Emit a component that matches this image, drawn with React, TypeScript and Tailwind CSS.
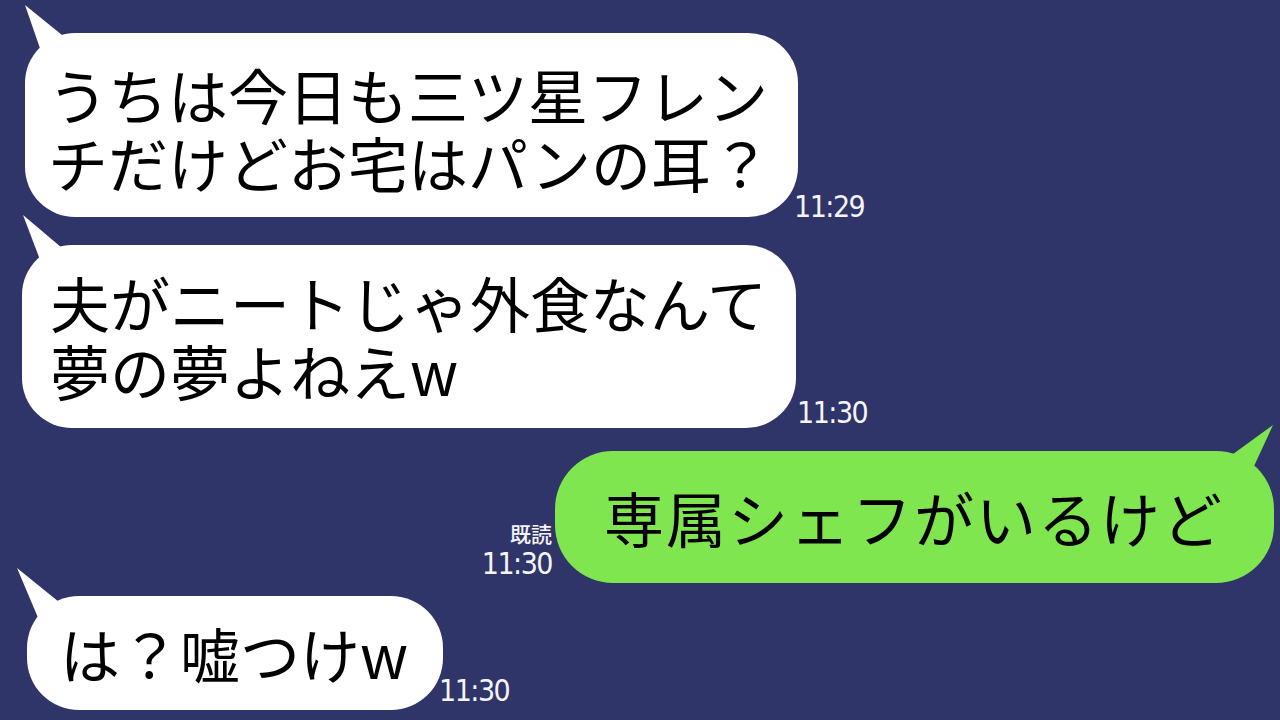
import React from "react";

function Time({ children, className = "" }: { children: React.ReactNode; className?: string }) {
  return (
    <div
      className={
        "font-['DejaVu_Sans_Condensed','DejaVu_Sans',sans-serif] text-[30px] tracking-[-1.5px] leading-none text-[#f4f4f8] whitespace-nowrap " +
        className
      }
    >
      {children}
    </div>
  );
}

function TailLeft({ points }: { points: string }) {
  return (
    <svg className="absolute left-0 top-0 overflow-visible" width="1" height="1">
      <polygon points={points} fill="#ffffff" />
    </svg>
  );
}

export default function App() {
  return (
    <div className="w-[1280px] h-[720px] bg-[#2f3469] overflow-hidden flex flex-col font-['Noto_Sans_CJK_JP',sans-serif] text-black">
      {/* Row 1 */}
      <div className="flex items-end ml-[25px] mt-[33px]">
        <div className="relative w-[773px] h-[184px] bg-white rounded-[50px] pl-[23px] pt-[27px] text-[60px] leading-[68px] whitespace-nowrap">
          <TailLeft points="0,-28 37,2 18,24" />
          <p className="relative">
            うちは今日も三ツ星フレン
            <br />
            チだけどお宅はパンの耳？
          </p>
        </div>
        <Time className="-mb-[5px] -ml-[4px]">11:29</Time>
      </div>

      {/* Row 2 */}
      <div className="flex items-end ml-[22px] mt-[28px]">
        <div className="relative w-[774px] h-[183px] bg-white rounded-[50px] pl-[28px] pt-[23px] text-[60px] leading-[68px] whitespace-nowrap">
          <TailLeft points="1,-30 40,3 20,20" />
          <p className="relative">
            夫がニートじゃ外食なんて
            <br />
            夢の夢よねえw
          </p>
        </div>
        <Time className="mb-[0px] ml-[1px]">11:30</Time>
      </div>

      {/* Row 3 */}
      <div className="flex items-end justify-end mr-[6px] mt-[23px]">
        <div className="flex flex-col items-end mr-[3px] mb-[4px]">
          <div className="text-[21px] leading-none font-medium text-[#f4f4f8] mb-[5px]">既読</div>
          <Time>11:30</Time>
        </div>
        <div className="relative w-[719px] h-[132px] bg-[#7fe64f] rounded-[58px] pl-[49px] flex items-center text-[60px] leading-[68px] tracking-[2px] whitespace-nowrap">
          <svg className="absolute right-0 top-0 overflow-visible" width="1" height="1">
            <polygon points="0,-26 -44,6 -24,26" fill="#7fe64f" />
          </svg>
          <div className="relative">専属シェフがいるけど</div>
        </div>
      </div>

      {/* Row 4 */}
      <div className="flex items-end ml-[27px] mt-[13px]">
        <div className="relative w-[416px] h-[114px] bg-white rounded-[52px] pl-[33px] pt-[23px] text-[60px] leading-[68px] whitespace-nowrap">
          <TailLeft points="-10,-28 32,6 12,24" />
          <div className="relative">は？嘘つけw</div>
        </div>
        <Time className="mb-[4px] -ml-[4px]">11:30</Time>
      </div>
    </div>
  );
}
